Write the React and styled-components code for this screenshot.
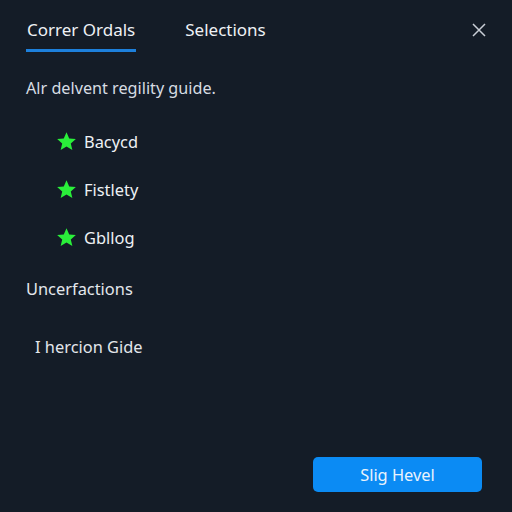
import React from "react";
import styled, { createGlobalStyle } from "styled-components";

const Global = createGlobalStyle`
  html, body { margin: 0; padding: 0; background: #141c27; }
  body { font-family: "Noto Sans", "Open Sans", sans-serif; }
`;

const Panel = styled.div`
  width: 512px;
  height: 512px;
  box-sizing: border-box;
  background: #141c27;
  color: #d9dee5;
  display: flex;
  flex-direction: column;
  padding: 0 26px;
  position: relative;
`;

const Tabs = styled.div`
  display: flex;
  align-items: flex-end;
  gap: 48px;
  height: 52px;
`;

const Tab = styled.div`
  font-size: 17px;
  color: #eef1f5;
  padding: 0 1px 8px;
  border-bottom: 3px solid ${p => (p.active ? "#1d80dc" : "transparent")};
`;

const Close = styled.button`
  position: absolute;
  top: 22px;
  right: 25px;
  width: 16px;
  height: 16px;
  padding: 0;
  border: 0;
  background: none;
  color: #c9ced6;
`;

const Intro = styled.p`
  margin: 25px 0 0;
  font-size: 16.2px;
  color: #d7dce3;
`;

const List = styled.ul`
  list-style: none;
  margin: 30px 0 0;
  padding: 0 0 0 30px;
  display: flex;
  flex-direction: column;
  gap: 24px;
`;

const Item = styled.li`
  display: flex;
  align-items: center;
  gap: 7px;
  height: 24px;
  font-size: 16.4px;
  color: #eef1f5;
`;

const Section = styled.div`
  margin: ${p => p.top}px 0 0 ${p => p.indent || 0}px;
  font-size: 16.4px;
  color: #e3e7ec;
`;

const Footer = styled.div`
  margin-top: auto;
  margin-bottom: 20px;
  display: flex;
  justify-content: flex-end;
  padding-right: 4px;
`;

const Primary = styled.button`
  width: 169px;
  height: 35px;
  border: 0;
  border-radius: 5px;
  background: #0b8bf4;
  color: #eaf3fc;
  font-family: inherit;
  font-size: 16.4px;
`;

const Star = () => (
  <svg width="21" height="21" viewBox="0 0 24 24">
    <path
      d="M12 1.5l3.1 7.1 7.6.6-5.8 5 1.8 7.5L12 17.7 5.3 21.7l1.8-7.5-5.8-5 7.6-.6z"
      fill="#2aef3a"
    />
  </svg>
);

const items = ["Bacycd", "Fistlety", "Gbllog"];

export default function App() {
  return (
    <Panel>
      <Global />
      <Tabs>
        <Tab active>Correr Ordals</Tab>
        <Tab>Selections</Tab>
      </Tabs>
      <Close aria-label="close">
        <svg width="16" height="16" viewBox="0 0 16 16">
          <path d="M2 2L14 14M14 2L2 14" stroke="currentColor" strokeWidth="1.5" />
        </svg>
      </Close>
      <Intro>Alr delvent regility guide.</Intro>
      <List>
        {items.map(t => (
          <Item key={t}>
            <Star />
            {t}
          </Item>
        ))}
      </List>
      <Section top={28}>Uncerfactions</Section>
      <Section top={35} indent={9}>I hercion Gide</Section>
      <Footer>
        <Primary>Slig Hevel</Primary>
      </Footer>
    </Panel>
  );
}
